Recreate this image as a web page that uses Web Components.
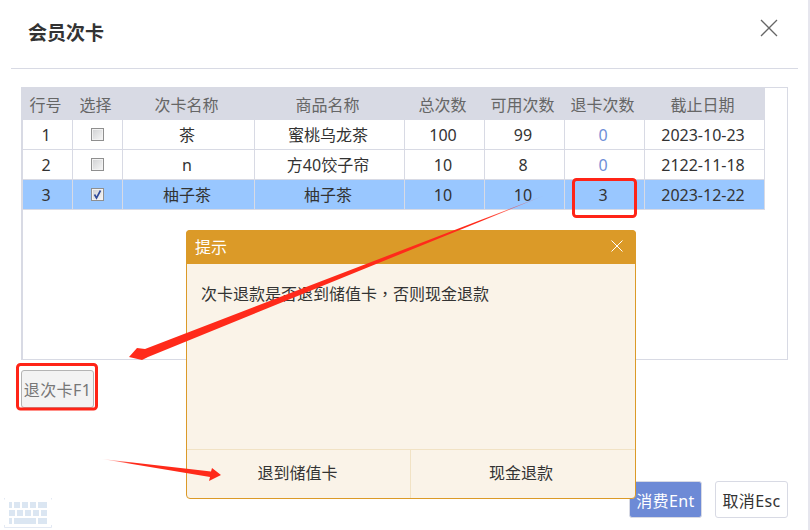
<!DOCTYPE html>
<html>
<head>
<meta charset="utf-8">
<style>
  html, body { margin: 0; padding: 0; background: #fff; }
  body { width: 810px; height: 530px; overflow: hidden; position: relative;
    font-family: "Noto Sans", "Noto Sans CJK SC", sans-serif; font-size: 16px; color: #333; }
</style>
</head>
<body>
<template id="tpl-card-table">
  <style>
    :host { display: block; }
    .grid { display: grid; grid-template-columns: 50px 50px 132px 150px 80px 80px 80px 120px; width: 742px; }
    .cell { height: 29px; line-height: 31px; padding-right: 3px; text-align: center; background: #fff;
      border-right: 1px solid #d8dae4; border-bottom: 1px solid #d8dae4; color: #333; }
    .head { height: 32px; line-height: 35px; padding-right: 5px; background: #d8dae4; color: #666; border: 0; }
    .sel { background: #99c7ff; border-color: #d8dae4; }
    .num { color: #6f8fd8; }
    .box { display: flex; align-items: center; justify-content: center; padding-right: 0; }
    .box span { width: 11px; height: 11px; border: 1px solid #8f8f8f; background: linear-gradient(135deg, #cfd0d2, #f7f7f7);
      box-shadow: inset 0 0 0 1px #f2f2f2; display: flex; }
  </style>
  <div class="grid" id="grid"></div>
</template>

<template id="tpl-member-dialog">
  <style>
    :host { display: block; width: 810px; height: 530px; box-sizing: border-box; border-right: 2px solid #e6e6ee; background: #fff; }
    header { display: flex; justify-content: space-between; height: 68px; margin: 0 10px 0 11px; border-bottom: 1px solid #d8dae4; }
    h1 { margin: 0; padding: 20px 0 0 17px; font-size: 19px; line-height: 26px; font-weight: 700; color: #333; }
    .x { margin: 19px 20px 0 0; }
    .panel { height: 271px; margin: 18px 20px 0 21px; border: 1px solid #d8dae4; border-left-width: 2px; box-sizing: content-box; }
    .side { margin: 10px 0 0 21px; }
    button { font: inherit; letter-spacing: .4px; height: 37px; width: 73px; padding: 0; border-radius: 3px; white-space: nowrap; }
    .back { height: 38px; background: #f3f3f3; border: 1px solid #b4b4b4; color: #777; }
    .foot { display: flex; justify-content: flex-end; gap: 13px; margin: 73px 20px 0 0; }
    .ok { background: #6d8ad6; border: 1px solid #d8dae4; color: #fff; }
    .esc { background: #fff; border: 1px solid #d8dae4; color: #333; }
  </style>
  <header>
    <h1>会员次卡</h1>
    <svg class="x" width="18" height="18" viewBox="0 0 18 18"><path d="M1 1L17 17M17 1L1 17" stroke="#666" stroke-width="1.3" fill="none"/></svg>
  </header>
  <div class="panel"><slot></slot></div>
  <div class="side"><button class="back">退次卡F1</button></div>
  <div class="foot"><button class="ok">消费Ent</button><button class="esc">取消Esc</button></div>
</template>

<template id="tpl-alert-box">
  <style>
    :host { position: absolute; left: 186px; top: 230px; width: 450px; height: 269px; box-sizing: border-box;
      display: flex; flex-direction: column; background: #faf3e8; border: 1px solid #db9a28; border-radius: 4px; }
    .top { display: flex; justify-content: space-between; align-items: center; height: 34px; background: #db9a28;
      color: #fff; padding: 0 13px 2px 9px; box-sizing: border-box; margin: -1px -1px 0; border-radius: 4px 4px 0 0; }
    .msg { flex: 1; padding: 18px 14px; line-height: 22px; color: #333; }
    .btns { display: grid; grid-template-columns: 223px 1fr; height: 48px; border-top: 1px solid #f1e2c4; }
    .btns div { text-align: center; line-height: 46px; padding-right: 2px; color: #333; }
    .btns div + div { padding-right: 4px; border-left: 1px solid #f1e2c4; }
  </style>
  <div class="top"><span><slot name="title"></slot></span>
    <svg width="12" height="12" viewBox="0 0 12 12"><path d="M.5.5L11.5 11.5M11.5.5L.5 11.5" stroke="#fff" stroke-width="1" fill="none"/></svg>
  </div>
  <div class="msg"><slot></slot></div>
  <div class="btns"><div>退到储值卡</div><div>现金退款</div></div>
</template>

<template id="tpl-mark-up">
  <style>
    :host { position: absolute; left: 0; top: 0; width: 810px; height: 530px; pointer-events: none; }
    svg { display: block; }
  </style>
  <svg width="810" height="530" viewBox="0 0 810 530">
    <defs>
      <linearGradient id="fa" gradientUnits="userSpaceOnUse" x1="543" y1="196" x2="130" y2="358">
        <stop offset="0" stop-color="#ff2a1a" stop-opacity=".3"/><stop offset=".15" stop-color="#ff2a1a"/>
      </linearGradient>
      <linearGradient id="fb" gradientUnits="userSpaceOnUse" x1="102" y1="459" x2="221" y2="475">
        <stop offset="0" stop-color="#ff2a1a" stop-opacity=".1"/><stop offset=".25" stop-color="#ff2a1a"/>
      </linearGradient>
    </defs>
    <rect x="573.5" y="179.5" width="62" height="37" rx="3" fill="none" stroke="#ff2417" stroke-width="3"/>
    <rect x="17.5" y="364.5" width="79" height="44.5" rx="3" fill="none" stroke="#ff2417" stroke-width="3"/>
    <path d="M543 196L145 349L137 348L129 357L142 360L148 357Z" fill="url(#fa)"/>
    <path d="M102 459L211 471.5L212 468L221 475L209 481L210 477Z" fill="url(#fb)"/>
  </svg>
</template>

<template id="tpl-key-board">
  <style>
    :host { position: absolute; left: 4px; top: 498px; width: 48px; height: 30px; }
    svg { display: block; }
  </style>
  <svg width="48" height="30" viewBox="0 0 48 30">
    <path d="M.5 0V1.5M47.5 0V1.5M.5 27V29.5H47.5V27" fill="none" stroke="#e3e9f3"/>
    <g fill="#dbe6f2" id="keys"></g>
  </svg>
</template>

<member-dialog>
  <card-table></card-table>
</member-dialog>
<alert-box><span slot="title">提示</span>次卡退款是否退到储值卡<span style="font-family: 'Noto Sans CJK TC', sans-serif">，</span>否则现金退款</alert-box>
<key-board></key-board>
<mark-up></mark-up>

<script>
  function stamp(el, id) {
    el.attachShadow({ mode: 'open' }).appendChild(document.getElementById(id).content.cloneNode(true));
  }

  class MemberDialog extends HTMLElement {
    constructor() { super(); stamp(this, 'tpl-member-dialog'); }
  }
  class AlertBox extends HTMLElement {
    constructor() { super(); stamp(this, 'tpl-alert-box'); }
  }
  class MarkUp extends HTMLElement {
    constructor() { super(); stamp(this, 'tpl-mark-up'); }
  }
  class KeyBoard extends HTMLElement {
    constructor() {
      super();
      stamp(this, 'tpl-key-board');
      const rows = [
        [4, [[5, 3], [10, 6], [18, 6], [26, 6], [34, 9]]],
        [12, [[5, 6], [13, 6], [21, 6], [29, 6], [37, 6]]],
        [20, [[5, 3], [10, 22], [34, 9]]]
      ];
      let html = '';
      rows.forEach(([y, keys]) => {
        keys.forEach(([x, w]) => { html += `<rect x="${x}" y="${y}" width="${w}" height="6"/>`; });
      });
      this.shadowRoot.querySelector('#keys').innerHTML = html;
    }
  }
  class CardTable extends HTMLElement {
    constructor() { super(); stamp(this, 'tpl-card-table'); }
    connectedCallback() {
      const heads = ['行号', '选择', '次卡名称', '商品名称', '总次数', '可用次数', '退卡次数', '截止日期'];
      const rows = [
        ['1', false, '茶', '蜜桃乌龙茶', '100', '99', '0', '2023-10-23'],
        ['2', false, 'n', '方40饺子帘', '10', '8', '0', '2122-11-18'],
        ['3', true, '柚子茶', '柚子茶', '10', '10', '3', '2023-12-22']
      ];
      const check = '<svg width="11" height="11" viewBox="0 0 11 11"><path d="M2.5 5.5L4.5 9L8.5 1.5" stroke="#2f4a9a" stroke-width="1.6" fill="none"/></svg>';
      let html = heads.map(h => `<div class="cell head">${h}</div>`).join('');
      rows.forEach(row => {
        const cls = row[1] ? 'cell sel' : 'cell';
        row.forEach((v, i) => {
          if (i === 1) html += `<div class="${cls} box"><span>${v ? check : ''}</span></div>`;
          else if (i === 6 && !row[1]) html += `<div class="${cls} num">${v}</div>`;
          else html += `<div class="${cls}">${v}</div>`;
        });
      });
      this.shadowRoot.querySelector('#grid').innerHTML = html;
    }
  }

  customElements.define('member-dialog', MemberDialog);
  customElements.define('alert-box', AlertBox);
  customElements.define('mark-up', MarkUp);
  customElements.define('key-board', KeyBoard);
  customElements.define('card-table', CardTable);
</script>
</body>
</html>
